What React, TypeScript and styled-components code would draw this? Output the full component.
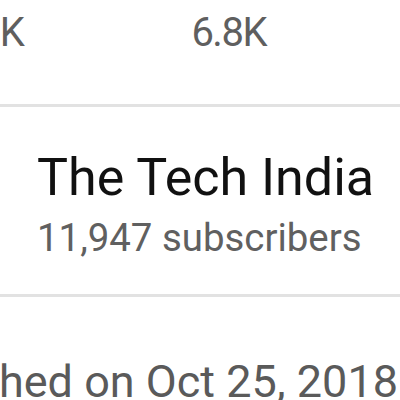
import React from 'react';
import styled, { createGlobalStyle } from 'styled-components';

const GlobalStyle = createGlobalStyle`
  html, body {
    margin: 0;
    padding: 0;
    background: #ffffff;
    overflow: hidden;
  }
  body {
    font-family: Roboto, "Noto Sans", "Liberation Sans", sans-serif;
  }
`;

const Page = styled.div`
  width: 400px;
  height: 400px;
  overflow: hidden;
  background: #ffffff;
`;

const StatsRow = styled.div`
  display: flex;
  justify-content: flex-end;
  gap: 168px;
  padding: 12px 134px 51px 0;
  white-space: nowrap;
`;

const Stat = styled.span`
  font-size: 40px;
  line-height: 41px;
  letter-spacing: -1.5px;
  color: #5f5f5f;
`;

const Divider = styled.div`
  height: 3px;
  background: #e2e2e2;
`;

const Channel = styled.div`
  padding: 45px 0 37px 37px;
  display: flex;
  flex-direction: column;
  gap: 15px;
`;

const ChannelName = styled.div`
  font-size: 52px;
  line-height: 52px;
  color: #111111;
`;

const Subscribers = styled.div`
  font-size: 38.4px;
  line-height: 38px;
  color: #606060;
`;

const DateRow = styled.div`
  display: flex;
  justify-content: flex-end;
  padding: 62px 2px 0 0;
  white-space: nowrap;
`;

const DateText = styled.span`
  font-size: 45px;
  line-height: 45px;
  color: #5a5a5a;
`;

export default function App() {
  return (
    <Page>
      <GlobalStyle />
      <StatsRow>
        <Stat>2.1K</Stat>
        <Stat>6.8K</Stat>
      </StatsRow>
      <Divider />
      <Channel>
        <ChannelName>The Tech India</ChannelName>
        <Subscribers>11,947 subscribers</Subscribers>
      </Channel>
      <Divider />
      <DateRow>
        <DateText>Published on Oct 25, 2018</DateText>
      </DateRow>
    </Page>
  );
}
